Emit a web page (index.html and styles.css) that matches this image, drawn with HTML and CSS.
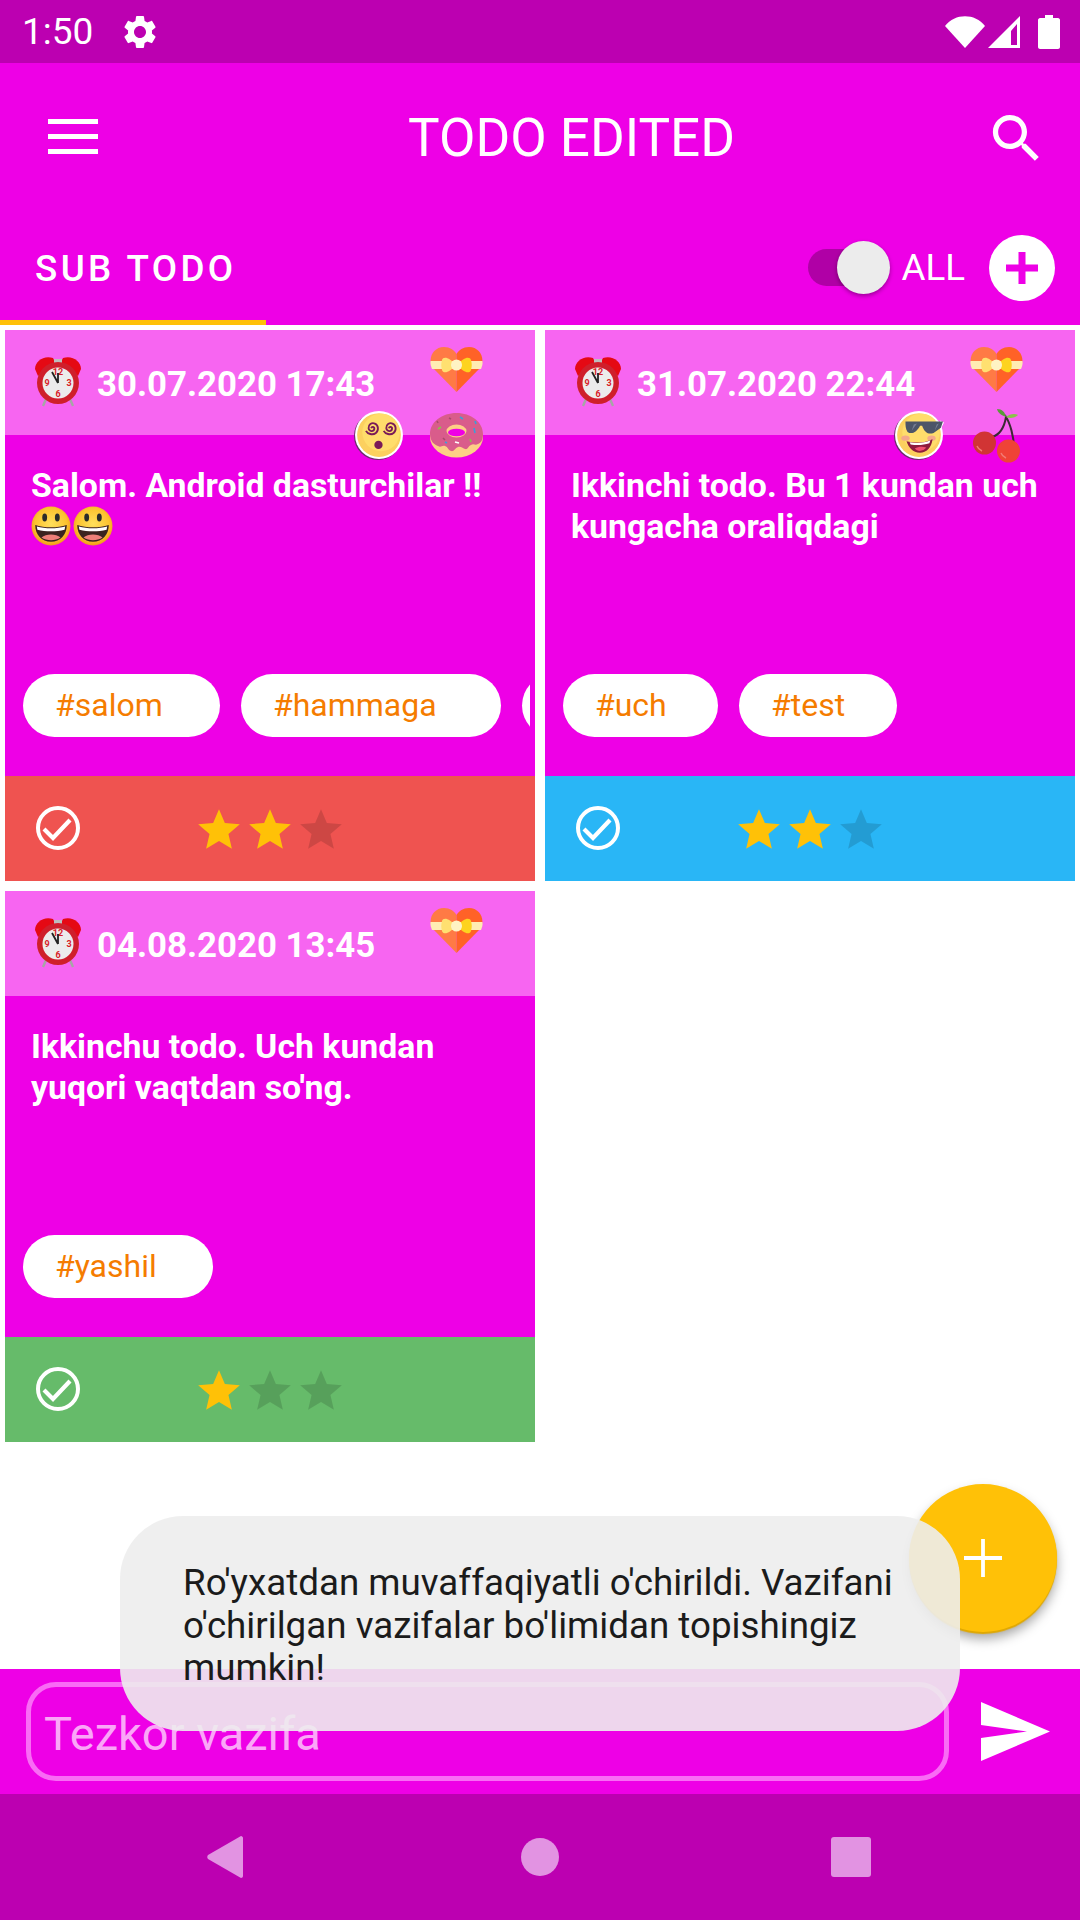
FILE: index.html
```html
<!DOCTYPE html>
<html>

<head>
  <title>Todo Edited</title>
  <link rel="stylesheet" href="styles.css">
</head>

<body>

  <svg class="sprites">
    <defs>
      <radialGradient id="smileFill" cx="50%" cy="45%" r="55%">
        <stop offset="0%" stop-color="#ffdf5c" />
        <stop offset="75%" stop-color="#fcc22e" />
        <stop offset="100%" stop-color="#f19a1c" />
      </radialGradient>
    </defs>
    <symbol id="star" viewBox="0 0 24 24">
      <path d="M12 17.27L18.18 21l-1.64-7.03L22 9.24l-7.19-.61L12 2 9.19 8.63 2 9.24l5.46 4.73L5.82 21z" />
    </symbol>
    <symbol id="check" viewBox="0 0 44 44">
      <circle cx="22" cy="22" r="20" fill="none" stroke="#fff" stroke-width="4" />
      <path d="M8 23l9 9L34 14" fill="none" stroke="#fff" stroke-width="4.200" />
    </symbol>
    <symbol id="clock" viewBox="0 0 46 52">
      <path d="M0 13C0 5 9-1 18 2L20 6 3 20z" fill="#e50914" />
      <path d="M46 13C46 5 37-1 28 2L26 6 43 20z" fill="#e50914" />
      <path d="M19 3h8v4h-8z" fill="#bdbdbd" />
      <path d="M11 43l-3 7M35 43l3 7" stroke="#a6a6a6" stroke-width="2.400" />
      <circle cx="23" cy="27" r="21" fill="#cf1f2b" />
      <circle cx="23" cy="27" r="15.500" fill="#ececec" />
    </symbol>
    <symbol id="heart" viewBox="0 0 53 45">
      <path d="M26.500 45L3 21C-3 12 3 0 14 0c6 0 10 3 12.500 7z" fill="#ff7a45" />
      <path d="M26.500 45L50 21C56 12 50 0 39 0c-6 0-10 3-12.500 7z" fill="#ff6227" />
      <path d="M.5 14h52c.4 3-.5 5.500-1.500 8H2c-1-2.500-1.900-5-1.500-8z" fill="#ffecb3" />
      <path d="M25 18C20 10 13 9 12 13c-1 4-1 6 0 10 1 4 8 3 13-5z" fill="#ffe070" />
      <path d="M28 18C33 10 40 9 41 13c1 4 1 6 0 10-1 4-8 3-13-5z" fill="#fdd31f" />
      <circle cx="26.500" cy="18" r="5.500" fill="#fff3c4" />
    </symbol>
    <symbol id="donut" viewBox="0 0 53 45">
      <ellipse cx="26.500" cy="24" rx="26.500" ry="20.500" fill="#fdcf86" />
      <path d="M0 21C0 9 12 0 26.500 0S53 9 53 21c0 6-2 9-5 10-3 2-4-1-7 1-3 1-3 5-6 4-3-1-4-3-7-2-3 1-4 5-7 4-3-1-3-4-6-5-3-1-4 2-7 0-3-1-8-4-8-12z" fill="#d95c8b" />
      <ellipse cx="26.500" cy="18" rx="10" ry="6.500" fill="#fdcf86" />
      <ellipse cx="26.500" cy="19.500" rx="8.500" ry="3.800" fill="#ee00e6" />
      <path d="M30 4l3 2M45 8l1 3M44 15l1 5" stroke="#3aa0d8" stroke-width="1.600" />
      <path d="M11 14l-3 2M40 26l1 3" stroke="#8bc34a" stroke-width="1.600" />
      <path d="M7 8l1 2M19 5l2 1M13 25l2 2" stroke="#a84a6c" stroke-width="1.600" />
      <path d="M25 29l4 1" stroke="#fff" stroke-width="1.800" />
      <path d="M15 29l2 1" stroke="#3aa0d8" stroke-width="1.600" />
    </symbol>
    <symbol id="dizzy" viewBox="0 0 48 48">
      <circle cx="23" cy="25" r="23" fill="#6c2b6c" />
      <circle cx="24" cy="24" r="23" fill="#fff" />
      <circle cx="24" cy="24" r="21" fill="#fcd05f" />
      <circle cx="26" cy="21.500" r="18" fill="#ffdd6b" />
      <path d="M16.500 17.500c.5-2 3.500-1.500 3 .8-.6 2.700-5 2.700-5.500-.8-.4-3.500 3-5.700 6-4.500 3.500 1.500 4 6.500 1 9-3 2.500-8 1-9.500-2" fill="none" stroke="#7a1b58" stroke-width="1.800" />
      <path d="M33.500 17.500c.5-2 3.500-1.500 3 .8-.6 2.700-5 2.700-5.500-.8-.4-3.500 3-5.700 6-4.500 3.500 1.500 4 6.500 1 9-3 2.500-8 1-9.500-2" fill="none" stroke="#7a1b58" stroke-width="1.800" />
      <circle cx="23.500" cy="33.500" r="4" fill="#7a1b58" />
    </symbol>
    <symbol id="cool" viewBox="0 0 48 48">
      <circle cx="23" cy="25" r="23" fill="#6c2b6c" />
      <circle cx="24" cy="24" r="23" fill="#fff" />
      <path d="M44 10l4 2-3 6z" fill="#fff" />
      <circle cx="24" cy="24" r="21" fill="#fcd05f" />
      <circle cx="26" cy="21.500" r="18" fill="#ffdd6b" />
      <ellipse cx="11" cy="27" rx="4" ry="2.500" fill="#f5a98a" />
      <ellipse cx="36" cy="27" rx="4" ry="2.500" fill="#f5a98a" />
      <path d="M11 11h36l-2 6-7 5c-5 2-9-1-11-7h-2c-3 6-8 9-12 6-2-3-2-6-2-10z" fill="#4d5568" />
      <path d="M19 14l3-1-5 7zM41 14l2-1-4 7z" fill="#787f94" />
      <path d="M12 30c8 2 16 2 25-2-1 8-6 13-12 13-7 0-11-5-13-11z" fill="#8e1b3d" />
      <path d="M15 31c6 1 14 1 20-2l-1 3c-6 2-13 2-18 1z" fill="#fff" />
      <path d="M20 37c3-2 8-2 11-1-2 3-8 5-11 1z" fill="#f0506e" />
    </symbol>
    <symbol id="cherry" viewBox="0 0 48 54">
      <path d="M19 28C26 26 31 20 33 8c4 6 8 20 8 31" fill="none" stroke="#3b2a33" stroke-width="2" />
      <path d="M33 8C28 6 25 4 24 0c5 0 8 3 9 8z" fill="#5a9b38" />
      <path d="M33 8c3-3 9-4 12-2-3 3-8 4-12 2z" fill="#8bc34a" />
      <circle cx="11.500" cy="34" r="11.500" fill="#d13434" />
      <circle cx="35.500" cy="42" r="11.500" fill="#ef4336" />
      <path d="M4 37c1 3 3 4 5 5M28 44c1 3 3 4 5 5" fill="none" stroke="#f27c74" stroke-width="1.400" />
    </symbol>
    <symbol id="smile" viewBox="0 0 38 38">
      <circle cx="19" cy="19" r="18.500" fill="url(#smileFill)" />
      <ellipse cx="13" cy="11" rx="2.300" ry="3.800" fill="#2b2b2b" />
      <ellipse cx="25" cy="11" rx="2.300" ry="3.800" fill="#2b2b2b" />
      <path d="M4 18c9 3 21 3 30 0 0 9-6 16-15 16S4 27 4 18z" fill="#3b2320" />
      <path d="M5.500 19.500c8 2.300 19 2.300 27 0l-.6 3c-8 2-18 2-25.800 0z" fill="#fff" />
      <path d="M10 30c4-4 14-4 18 0-5 3.500-13 3.500-18 0z" fill="#ee7f79" />
    </symbol>
  </svg>

  <div class="screen">

    <div class="status-bar">
      <span class="status-time">1:50</span>
      <svg class="status-gear" viewBox="0 0 24 24">
        <path d="M19.14 12.94c.04-.3.06-.61.06-.94 0-.32-.02-.64-.07-.94l2.030-1.580c.18-.14.23-.41.12-.61l-1.920-3.320c-.12-.22-.37-.29-.59-.22l-2.390.96c-.5-.38-1.030-.7-1.620-.94l-.36-2.540c-.04-.24-.24-.41-.48-.41h-3.840c-.24 0-.43.17-.47.41l-.36 2.540c-.59.24-1.130.57-1.620.94l-2.390-.96c-.22-.08-.47 0-.59.22L2.740 8.870c-.12.21-.08.47.12.61l2.030 1.580c-.05.3-.09.63-.09.94s.02.64.07.94l-2.030 1.580c-.18.14-.23.41-.12.61l1.920 3.320c.12.22.37.29.59.22l2.390-.96c.5.38 1.030.7 1.620.94l.36 2.540c.05.24.24.41.48.41h3.840c.24 0 .44-.17.47-.41l.36-2.540c.59-.24 1.130-.56 1.620-.94l2.390.96c.22.08.47 0 .59-.22l1.920-3.320c.12-.22.07-.47-.12-.61l-2.010-1.580zM12 15.600c-1.980 0-3.600-1.620-3.600-3.600s1.620-3.600 3.600-3.600 3.600 1.620 3.600 3.600-1.620 3.600-3.600 3.600z" />
      </svg>
      <span class="status-space"></span>
      <svg class="status-wifi" viewBox="0 0 40 32">
        <path d="M0 10C10-3 30-3 40 10L20 32z" />
      </svg>
      <svg class="status-signal" viewBox="0 0 32 32">
        <path fill-rule="evenodd" d="M32 0v32H0zM29 8l-6 7v14h6z" />
      </svg>
      <svg class="status-battery" viewBox="0 0 22 34">
        <path d="M7 0h8v3h5c1 0 2 1 2 2v27c0 1-1 2-2 2H2c-1 0-2-1-2-2V5c0-1 1-2 2-2h5z" />
      </svg>
    </div>

    <header class="app-bar">
      <div class="toolbar">
        <div class="menu-icon"><span></span><span></span><span></span></div>
        <h1 class="title">TODO EDITED</h1>
        <svg class="search-icon" viewBox="0 0 24 24">
          <path d="M15.500 14h-.79l-.28-.27C15.410 12.590 16 11.110 16 9.500 16 5.910 13.090 3 9.500 3S3 5.910 3 9.500 5.910 16 9.500 16c1.610 0 3.090-.59 4.230-1.570l.27.28v.79l5 4.990L20.490 19l-4.990-5zm-6 0C7.010 14 5 11.990 5 9.500S7.010 5 9.500 5 14 7.010 14 9.500 11.990 14 9.500 14z" />
        </svg>
      </div>
      <div class="tab-row">
        <div class="tab">SUB TODO</div>
        <div class="switch"><span class="switch-thumb"></span></div>
        <span class="switch-label">ALL</span>
        <svg class="add-circle" viewBox="0 0 66 66">
          <circle cx="33" cy="33" r="33" fill="#fff" />
          <path d="M29.500 17h7v12.500H49v7H36.500V49h-7V36.500H17v-7h12.500z" fill="#ee00e6" />
        </svg>
      </div>
    </header>

    <main class="todo-grid">

      <article class="card">
        <div class="card-head">
          <svg class="card-clock" viewBox="0 0 46 52">
            <use href="#clock" width="46" height="52" />
            <text class="clock-num" x="23" y="19">12</text>
            <text class="clock-num" x="34" y="30">3</text>
            <text class="clock-num" x="23" y="41">6</text>
            <text class="clock-num" x="12" y="30">9</text>
            <path class="clock-hand" d="M23 27l-6-11M23 27v-10" />
          </svg>
          <span class="card-date">30.07.2020 17:43</span>
          <svg class="sticker sticker-heart"><use href="#heart" /></svg>
          <svg class="sticker sticker-face"><use href="#dizzy" /></svg>
          <svg class="sticker sticker-food"><use href="#donut" /></svg>
        </div>
        <div class="card-body">
          <p class="card-text">Salom. Android dasturchilar !!<br><svg class="emoji"><use href="#smile" /></svg><svg class="emoji"><use href="#smile" /></svg></p>
          <div class="chips">
            <span class="chip chip-salom">#salom</span>
            <span class="chip chip-hammaga">#hammaga</span>
            <span class="chip chip-cut"></span>
          </div>
        </div>
        <div class="card-foot foot-red">
          <svg class="done-icon"><use href="#check" /></svg>
          <div class="stars">
            <svg class="star star-on"><use href="#star" /></svg>
            <svg class="star star-on"><use href="#star" /></svg>
            <svg class="star"><use href="#star" /></svg>
          </div>
        </div>
      </article>

      <article class="card">
        <div class="card-head">
          <svg class="card-clock" viewBox="0 0 46 52">
            <use href="#clock" width="46" height="52" />
            <text class="clock-num" x="23" y="19">12</text>
            <text class="clock-num" x="34" y="30">3</text>
            <text class="clock-num" x="23" y="41">6</text>
            <text class="clock-num" x="12" y="30">9</text>
            <path class="clock-hand" d="M23 27l-6-11M23 27v-10" />
          </svg>
          <span class="card-date">31.07.2020 22:44</span>
          <svg class="sticker sticker-heart"><use href="#heart" /></svg>
          <svg class="sticker sticker-face"><use href="#cool" /></svg>
          <svg class="sticker sticker-cherry"><use href="#cherry" /></svg>
        </div>
        <div class="card-body">
          <p class="card-text">Ikkinchi todo. Bu 1 kundan uch kungacha oraliqdagi</p>
          <div class="chips">
            <span class="chip chip-uch">#uch</span>
            <span class="chip chip-test">#test</span>
          </div>
        </div>
        <div class="card-foot foot-blue">
          <svg class="done-icon"><use href="#check" /></svg>
          <div class="stars">
            <svg class="star star-on"><use href="#star" /></svg>
            <svg class="star star-on"><use href="#star" /></svg>
            <svg class="star"><use href="#star" /></svg>
          </div>
        </div>
      </article>

      <article class="card">
        <div class="card-head">
          <svg class="card-clock" viewBox="0 0 46 52">
            <use href="#clock" width="46" height="52" />
            <text class="clock-num" x="23" y="19">12</text>
            <text class="clock-num" x="34" y="30">3</text>
            <text class="clock-num" x="23" y="41">6</text>
            <text class="clock-num" x="12" y="30">9</text>
            <path class="clock-hand" d="M23 27l-6-11M23 27v-10" />
          </svg>
          <span class="card-date">04.08.2020 13:45</span>
          <svg class="sticker sticker-heart"><use href="#heart" /></svg>
        </div>
        <div class="card-body">
          <p class="card-text">Ikkinchu todo. Uch kundan yuqori vaqtdan so'ng.</p>
          <div class="chips">
            <span class="chip chip-yashil">#yashil</span>
          </div>
        </div>
        <div class="card-foot foot-green">
          <svg class="done-icon"><use href="#check" /></svg>
          <div class="stars">
            <svg class="star star-on"><use href="#star" /></svg>
            <svg class="star"><use href="#star" /></svg>
            <svg class="star"><use href="#star" /></svg>
          </div>
        </div>
      </article>

    </main>

    <div class="quick-bar">
      <div class="quick-input">Tezkor vazifa</div>
      <svg class="send-icon" viewBox="0 0 69 59">
        <path d="M0 0l69 29.500L0 59V36l46-6.500L0 23z" />
      </svg>
    </div>

    <nav class="nav-bar">
      <svg class="nav-back" viewBox="0 0 36 42">
        <path d="M34 0c1 0 2 1 2 2v38c0 1-1 2-2 2L1 23c-1-1-1-3 0-4z" />
      </svg>
      <span class="nav-home"></span>
      <span class="nav-recent"></span>
    </nav>

    <button class="fab">
      <svg viewBox="0 0 40 40">
        <path d="M18 0h4v18h18v4H22v18h-4V22H0v-4h18z" />
      </svg>
    </button>

    <div class="toast">Ro'yxatdan muvaffaqiyatli o'chirildi. Vazifani o'chirilgan vazifalar bo'limidan topishingiz mumkin!</div>

  </div>

</body>

</html>
```

FILE: styles.css
```css
body {
  margin: 0;
  font-family: Roboto, "Noto Sans", sans-serif;
  background: #fff;
}

.sprites {
  position: absolute;
  width: 0;
  height: 0;
}

.screen {
  position: relative;
  width: 1080px;
  height: 1920px;
  display: flex;
  flex-direction: column;
  overflow: hidden;
  background: #fff;
}

/* status bar */
.status-bar {
  height: 63px;
  flex: none;
  display: flex;
  align-items: center;
  padding: 0 20px 0 22px;
  box-sizing: border-box;
  background: #bc00b1;
  color: #fff;
}

.status-bar svg {
  fill: #fff;
  flex: none;
}

.status-time {
  font-size: 37px;
  width: 98px;
}

.status-gear {
  width: 40px;
  height: 40px;
}

.status-space {
  flex: 1;
}

.status-wifi {
  width: 40px;
  height: 32px;
  margin-right: 3px;
}

.status-signal {
  width: 32px;
  height: 32px;
  margin-right: 18px;
}

.status-battery {
  width: 22px;
  height: 34px;
}

/* app bar */
.app-bar {
  height: 262px;
  flex: none;
  background: #ee00e6;
  color: #fff;
}

.toolbar {
  height: 147px;
  display: flex;
  align-items: center;
  padding: 0 32px 0 48px;
}

.menu-icon {
  width: 50px;
  display: flex;
  flex-direction: column;
  gap: 10px;
}

.menu-icon span {
  height: 5px;
  background: #fff;
}

.title {
  flex: 1;
  margin: 0;
  padding: 2px 0 0 60px;
  font-size: 53px;
  font-weight: 400;
  text-align: center;
}

.search-icon {
  width: 63px;
  height: 63px;
  margin-top: 3px;
  fill: #fff;
}

.tab-row {
  height: 115px;
  display: flex;
  align-items: center;
  padding-right: 25px;
}

.tab {
  width: 266px;
  height: 115px;
  box-sizing: border-box;
  line-height: 118px;
  padding-left: 35px;
  border-bottom: 5px solid #ffc107;
  font-size: 36.750px;
  font-weight: 500;
  letter-spacing: 3.400px;
  margin-right: auto;
}

.switch {
  position: relative;
  width: 80px;
  height: 37px;
  border-radius: 19px;
  background: #b000a6;
  margin-right: 13px;
}

.switch-thumb {
  position: absolute;
  right: -2px;
  top: -8px;
  width: 53px;
  height: 53px;
  border-radius: 50%;
  background: #ececec;
  box-shadow: 0 2px 4px rgba(0, 0, 0, 0.35);
}

.switch-label {
  font-size: 36.750px;
  margin-right: 24px;
}

.add-circle {
  width: 66px;
  height: 66px;
}

/* cards */
.todo-grid {
  flex: 1;
  display: grid;
  grid-template-columns: 530px 530px;
  grid-auto-rows: 551px;
  gap: 10px;
  padding: 5px;
  align-content: start;
}

.card {
  display: flex;
  flex-direction: column;
  background: #ee00e6;
  color: #fff;
}

.card-head {
  position: relative;
  height: 105px;
  flex: none;
  display: flex;
  align-items: center;
  padding-left: 30px;
  background: #f765f1;
}

.card-clock {
  width: 46px;
  height: 52px;
  margin: -1px 16px 0 0;
}

.clock-num {
  font-size: 9px;
  font-weight: 700;
  fill: #d81b28;
  text-anchor: middle;
}

.clock-hand {
  fill: none;
  stroke: #222;
  stroke-width: 1.800;
}

.card-date {
  font-size: 34.800px;
  font-weight: 700;
  padding-top: 2px;
}

.sticker {
  position: absolute;
}

.sticker-heart {
  left: 425px;
  top: 17px;
  width: 53px;
  height: 45px;
}

.sticker-face {
  left: 349px;
  top: 80px;
  width: 50px;
  height: 50px;
}

.sticker-food {
  left: 425px;
  top: 83px;
  width: 53px;
  height: 45px;
}

.sticker-cherry {
  left: 428px;
  top: 79px;
  width: 48px;
  height: 54px;
}

.card-body {
  flex: 1;
  display: flex;
  flex-direction: column;
  padding-top: 30px;
  overflow: hidden;
}

.card-text {
  flex: 1;
  margin: 0;
  padding: 0 26px;
  font-size: 33.800px;
  font-weight: 700;
  line-height: 41px;
}

.emoji {
  width: 40px;
  height: 40px;
  vertical-align: top;
  margin-right: 2px;
}

.chips {
  display: flex;
  gap: 21px;
  margin: 0 5px 39px 18px;
  overflow: hidden;
}

.chip {
  flex: none;
  height: 63px;
  box-sizing: border-box;
  padding-left: 32px;
  border-radius: 32px;
  background: #fff;
  color: #f57c00;
  font-size: 32px;
  line-height: 62px;
}

.chip-salom {
  width: 197px;
}

.chip-hammaga {
  width: 260px;
}

.chip-cut {
  width: 120px;
}

.chip-uch {
  width: 155px;
}

.chip-test {
  width: 158px;
}

.chip-yashil {
  width: 190px;
}

.card-foot {
  height: 105px;
  flex: none;
  display: flex;
  align-items: center;
  padding-left: 31px;
}

.foot-red {
  background: #ef5350;
}

.foot-blue {
  background: #29b6f6;
}

.foot-green {
  background: #66bb6a;
}

.done-icon {
  width: 44px;
  height: 44px;
  margin-top: -1px;
}

.stars {
  display: flex;
  margin-left: 114px;
  gap: 1px;
  margin-top: 3px;
}

.star {
  width: 50px;
  height: 50px;
  fill: rgba(0, 0, 0, 0.14);
}

.star-on {
  fill: #ffc107;
}

/* quick add bar */
.quick-bar {
  height: 125px;
  flex: none;
  display: flex;
  align-items: center;
  padding: 0 30px 0 26px;
  box-sizing: border-box;
  background: #ee00e6;
}

.quick-input {
  width: 923px;
  height: 99px;
  box-sizing: border-box;
  border: 5px solid #f96bf5;
  border-radius: 30px;
  padding-left: 13px;
  font-size: 47px;
  line-height: 94px;
  color: #fba6f8;
  margin-right: auto;
}

.send-icon {
  width: 69px;
  height: 59px;
  fill: #fff;
}

/* nav bar */
.nav-bar {
  height: 126px;
  flex: none;
  position: relative;
  display: flex;
  align-items: center;
  background: #bc00b1;
}

.nav-back {
  width: 36px;
  height: 42px;
  margin-left: 207px;
  fill: #e293e2;
}

.nav-home {
  width: 38px;
  height: 38px;
  margin-left: 278px;
  border-radius: 50%;
  background: #e293e2;
}

.nav-recent {
  width: 40px;
  height: 40px;
  margin-left: 272px;
  border-radius: 3px;
  background: #e293e2;
}

/* things that float over the page */
.fab {
  position: absolute;
  left: 909px;
  top: 1484px;
  width: 148px;
  height: 148px;
  padding: 0;
  border: none;
  border-radius: 50%;
  background: #ffc107;
  box-shadow: 0 2px 1px #e0a800, 0 7px 12px rgba(0, 0, 0, 0.35);
  display: flex;
  align-items: center;
  justify-content: center;
}

.fab svg {
  width: 38px;
  height: 38px;
  fill: #fff;
}

.toast {
  position: absolute;
  left: 120px;
  top: 1516px;
  width: 840px;
  height: 215px;
  box-sizing: border-box;
  padding: 46px 63px 0;
  border-radius: 63px;
  background: rgba(237, 237, 237, 0.9);
  color: #1b1b1b;
  font-size: 36.750px;
  line-height: 42.500px;
}
```
